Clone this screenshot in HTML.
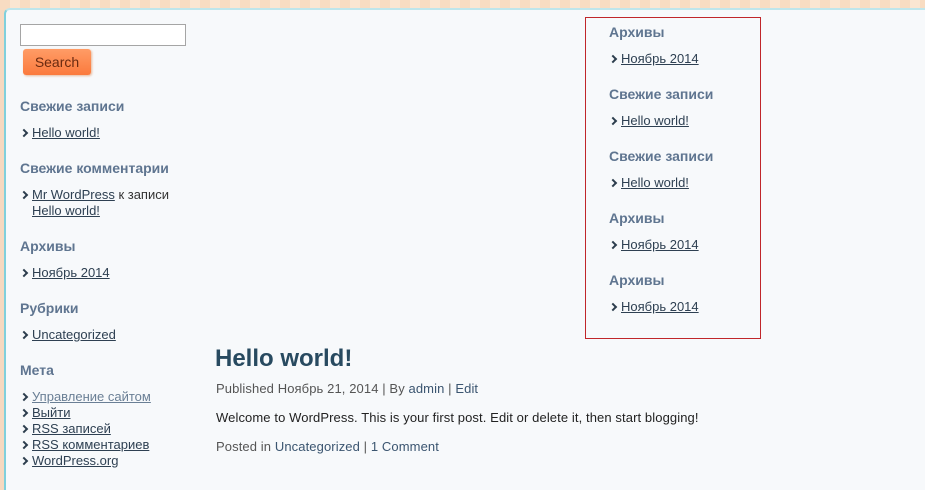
<!DOCTYPE html>
<html><head><meta charset="utf-8"><style>
body{margin:0;width:925px;height:482px;overflow:hidden;background:#f6d9c0;font-family:"Liberation Sans",Arial,sans-serif;font-size:13px;position:relative}
.top{position:absolute;left:0;top:0;width:925px;height:10px;background:repeating-linear-gradient(90deg,#f8dcc2 0 10px,#fbe6d2 10px 20px)}
.wrap{position:absolute;left:4px;top:8px;width:940px;height:480px;background:#f7f9fb;border-left:2px solid #7fd0dc;border-top:2px solid #bfe6ec;border-radius:6px 0 0 0}
.a{position:absolute;white-space:nowrap}
h3{position:absolute;margin:0;font-size:14px;font-weight:bold;color:#5f7590;white-space:nowrap;line-height:16px}
.li{position:absolute;white-space:nowrap;line-height:16px;color:#333;padding-left:12px;margin-top:1px}
.li:before{content:"";position:absolute;left:1px;top:5px;width:4px;height:4px;border-right:2px solid #2c3d4d;border-top:2px solid #2c3d4d;transform:rotate(45deg)}
.li.n:before{display:none}
a{color:#2e4052;text-decoration:underline}
.box{position:absolute;left:585px;top:17px;width:174px;height:320px;border:1px solid #c0262a}
.btn{position:absolute;left:23px;top:49px;width:68px;height:26px;border-radius:3px;background:linear-gradient(#ff9c66,#fb7a3d);color:#6a2a10;font-size:14px;text-align:center;line-height:26px;box-shadow:1px 1px 2px #e6b99a}
.p{letter-spacing:0.1px}
</style></head><body>
<div class="top"></div>
<div class="wrap"></div>
<div class="a" style="left:20px;top:24px;width:164px;height:20px;background:#fff;border:1px solid #a5a5a5"></div>
<div class="btn">Search</div>

<h3 style="left:20px;top:98px">Свежие записи</h3>
<div class="li" style="left:20px;top:124px"><a>Hello world!</a></div>
<h3 style="left:20px;top:160px">Свежие комментарии</h3>
<div class="li" style="left:20px;top:186px"><a>Mr WordPress</a> к записи</div>
<div class="li n" style="left:20px;top:202px"><a>Hello world!</a></div>
<h3 style="left:20px;top:238px">Архивы</h3>
<div class="li" style="left:20px;top:264px"><a>Ноябрь 2014</a></div>
<h3 style="left:20px;top:300px">Рубрики</h3>
<div class="li" style="left:20px;top:326px"><a>Uncategorized</a></div>
<h3 style="left:20px;top:362px">Мета</h3>
<div class="li" style="left:20px;top:388px"><a style="color:#6a7f95">Управление сайтом</a></div>
<div class="li" style="left:20px;top:404px"><a>Выйти</a></div>
<div class="li" style="left:20px;top:420px"><a>RSS записей</a></div>
<div class="li" style="left:20px;top:436px"><a>RSS комментариев</a></div>
<div class="li" style="left:20px;top:452px"><a>WordPress.org</a></div>

<div class="box"></div>
<h3 style="left:609px;top:24px">Архивы</h3>
<div class="li" style="left:609px;top:50px"><a>Ноябрь 2014</a></div>
<h3 style="left:609px;top:86px">Свежие записи</h3>
<div class="li" style="left:609px;top:112px"><a>Hello world!</a></div>
<h3 style="left:609px;top:148px">Свежие записи</h3>
<div class="li" style="left:609px;top:174px"><a>Hello world!</a></div>
<h3 style="left:609px;top:210px">Архивы</h3>
<div class="li" style="left:609px;top:236px"><a>Ноябрь 2014</a></div>
<h3 style="left:609px;top:272px">Архивы</h3>
<div class="li" style="left:609px;top:298px"><a>Ноябрь 2014</a></div>

<div class="a" style="left:215px;top:344px;font-size:24px;font-weight:bold;color:#284a60;line-height:30px">Hello world!</div>
<div class="a p" style="left:216px;top:381px;color:#555;line-height:16px">Published Ноябрь 21, 2014 | By <span style="color:#3b5570">admin</span> | <span style="color:#3b5570">Edit</span></div>
<div class="a p" style="left:216px;top:410px;color:#222;line-height:16px">Welcome to WordPress. This is your first post. Edit or delete it, then start blogging!</div>
<div class="a p" style="left:216px;top:439px;color:#555;line-height:16px">Posted in <span style="color:#3b5570">Uncategorized</span> | <span style="color:#3b5570">1 Comment</span></div>
</body></html>
